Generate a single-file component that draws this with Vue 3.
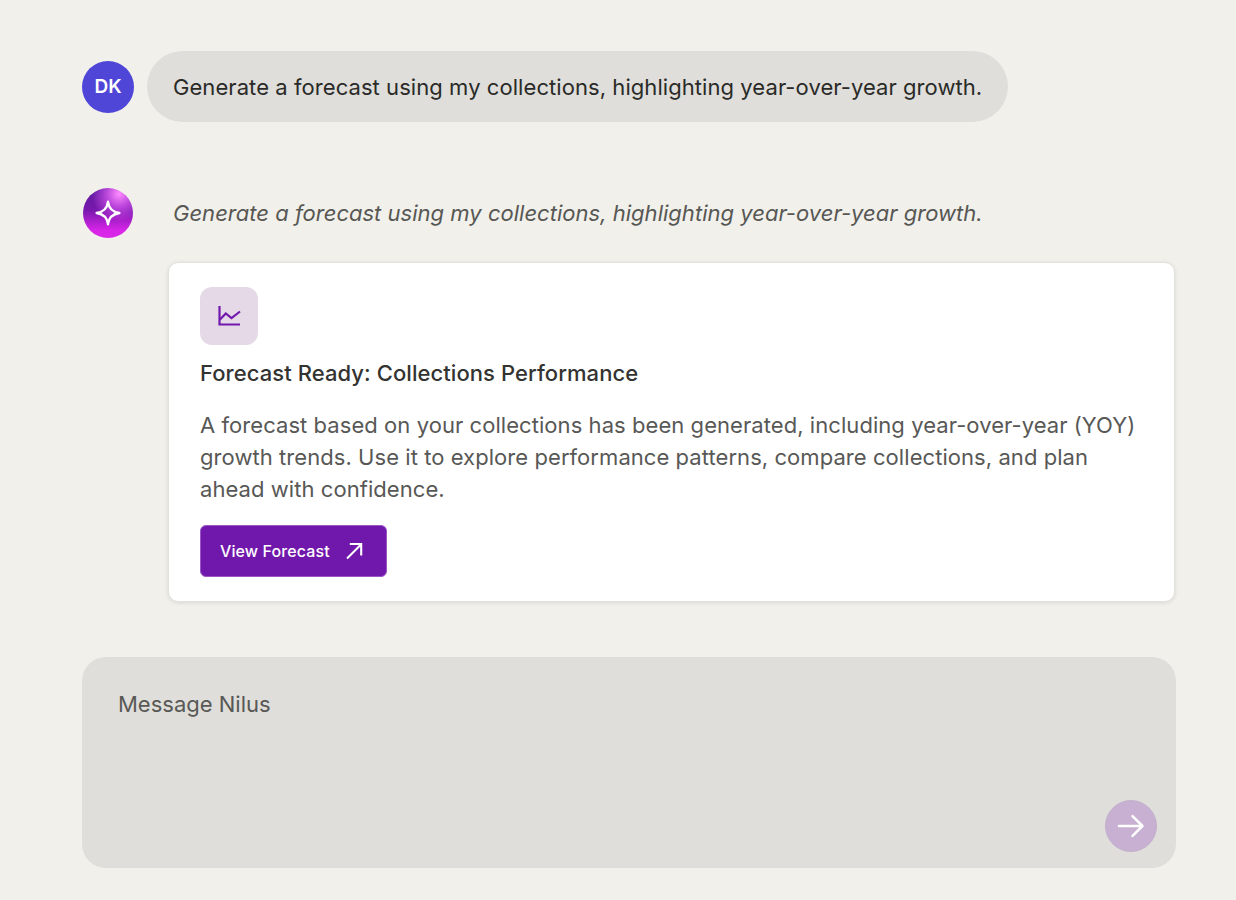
<template>
  <div class="page">
    <div class="row-user">
      <div class="avatar">DK</div>
      <div class="bubble">{{ prompt }}</div>
    </div>

    <div class="row-bot">
      <div class="bot-avatar">
        <svg width="26" height="26" viewBox="0 0 26 26" fill="none">
          <path d="M13 1.6C13.8 8.2 17.4 12 24.4 13C17.4 14 13.8 17.8 13 24.4C12.2 17.8 8.6 14 1.6 13C8.6 12 12.2 8.2 13 1.6Z" stroke="#fff" stroke-width="2.3" stroke-linejoin="round" />
        </svg>
      </div>
      <div class="bot-body">
        <p class="echo">{{ prompt }}</p>
        <div class="card">
          <div class="card-icon">
            <svg width="24" height="24" viewBox="0 0 24 24" fill="none" stroke="#7118ac" stroke-width="2.2">
              <path d="M2.5 2V20.5H23" />
              <path d="M3 15.5L8.8 9.5L14.5 14L23 7.5" />
            </svg>
          </div>
          <h3 class="card-title">Forecast Ready: Collections Performance</h3>
          <p class="card-text">A forecast based on your collections has been generated, including year-over-year (YOY) growth trends. Use it to explore performance patterns, compare collections, and plan ahead with confidence.</p>
          <button class="view-btn">
            View Forecast
            <svg width="18" height="18" viewBox="0 0 18 18" fill="none" stroke="#fff" stroke-width="2.1">
              <path d="M2 16.5L16 2.5M4.8 2H16.2V13.4" />
            </svg>
          </button>
        </div>
      </div>
    </div>

    <div class="composer">
      <span class="placeholder">Message Nilus</span>
      <button class="send">
        <svg width="28" height="24" viewBox="0 0 28 24" fill="none" stroke="#fff" stroke-width="2.5" stroke-linecap="round" stroke-linejoin="round">
          <path d="M2 12H25.5M15.5 2.2L25.5 12L15.5 21.8" />
        </svg>
      </button>
    </div>
  </div>
</template>

<script setup>
const prompt = 'Generate a forecast using my collections, highlighting year-over-year growth.'
</script>

<style>
html, body {
  background: #f1f0eb;
}
</style>

<style scoped>
.page {
  width: 1236px;
  height: 900px;
  box-sizing: border-box;
  padding: 51px 60px 0 82px;
  background: #f1f0eb;
  font-family: Inter, "Liberation Sans", sans-serif;
}
.row-user {
  display: flex;
  align-items: center;
  gap: 13px;
}
.avatar {
  width: 52px;
  height: 52px;
  border-radius: 50%;
  background: #4f46d8;
  color: #fff;
  font-size: 19px;
  font-weight: 600;
  display: flex;
  align-items: center;
  justify-content: center;
}
.bubble {
  height: 71px;
  display: flex;
  align-items: center;
  padding: 0 26px;
  border-radius: 36px;
  background: #dfdeda;
  color: #2a2a28;
  font-size: 22px;
  letter-spacing: 0.065px;
  white-space: nowrap;
}
.row-bot {
  display: flex;
  margin-top: 66px;
  gap: 36px;
}
.bot-avatar {
  width: 50px;
  height: 50px;
  margin-left: 1px;
  flex: none;
  border-radius: 50%;
  display: flex;
  align-items: center;
  justify-content: center;
  background:
    radial-gradient(circle at 72% 12%, #ff8cff 0%, rgba(240, 100, 255, 0.6) 22%, rgba(200, 40, 230, 0) 48%),
    linear-gradient(180deg, #5c1a9e 0%, #7a18ae 45%, #d825e8 85%, #d92ae8 100%);
}
.bot-body {
  flex: 1;
  min-width: 0;
}
.echo {
  margin: 12px 0 0 4px;
  font-size: 22px;
  line-height: 27px;
  font-style: italic;
  letter-spacing: 0.02px;
  color: #575754;
  white-space: nowrap;
}
.card {
  box-sizing: border-box;
  width: 1007px;
  height: 340px;
  margin-top: 35px;
  margin-left: -1px;
  padding: 24px 31px;
  background: #fff;
  border: 1px solid #e2e1dc;
  border-radius: 10px;
  box-shadow: 0 1px 4px rgba(0, 0, 0, 0.1);
}
.card-icon {
  width: 58px;
  height: 58px;
  border-radius: 12px;
  background: #e5d9e8;
  display: flex;
  align-items: center;
  justify-content: center;
}
.card-title {
  margin: 14px 0 0;
  font-size: 22px;
  line-height: 28px;
  font-weight: 500;
  letter-spacing: 0.07px;
  color: #333331;
}
.card-text {
  margin: 22px 0 0;
  font-size: 22px;
  line-height: 32px;
  letter-spacing: 0.06px;
  color: #585856;
}
.view-btn {
  margin-top: 20px;
  width: 187px;
  height: 52px;
  box-sizing: border-box;
  display: flex;
  align-items: center;
  gap: 15px;
  padding: 0 0 0 19px;
  background: #7118ac;
  border: 1px solid #9a57c4;
  border-radius: 6px;
  color: #fff;
  font-family: inherit;
  font-size: 16px;
  font-weight: 500;
  letter-spacing: 0.1px;
}
.composer {
  position: relative;
  box-sizing: border-box;
  width: 1094px;
  height: 211px;
  margin-top: 55px;
  padding: 33px 36px;
  border-radius: 24px;
  background: #dfdeda;
}
.placeholder {
  font-size: 22px;
  line-height: 28px;
  color: #585855;
}
.send {
  position: absolute;
  right: 19px;
  bottom: 16px;
  width: 52px;
  height: 52px;
  padding: 0;
  border: 1px solid #c4b0cd;
  border-radius: 50%;
  background: #c7b0d1;
  display: flex;
  align-items: center;
  justify-content: center;
}
</style>
